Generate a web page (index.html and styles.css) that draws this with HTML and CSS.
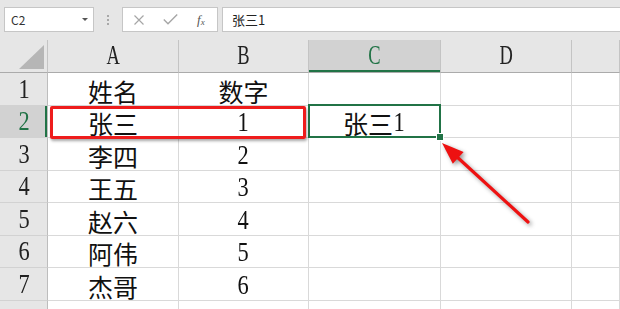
FILE: index.html
```html
<!DOCTYPE html>
<html lang="zh-CN">
<head>
    <meta charset="UTF-8">
    <meta name="viewport" content="width=device-width, initial-scale=1.0">
    <title>张三1</title>
    <link rel="stylesheet" href="styles.css">
</head>
<body>
    <div class="toolbar">
        <div class="namebox">
            <span>C2</span>
            <i class="caret"></i>
        </div>
        <div class="grip"><i></i><i></i><i></i></div>
        <div class="fx-btns">
            <svg class="btn" width="12" height="10" viewBox="0 0 12 10">
                <path d="M1.5 0.5 L10.5 9.5 M10.5 0.5 L1.5 9.5" stroke="#a6a6a6" stroke-width="1.2" fill="none"/>
            </svg>
            <svg class="btn" width="15" height="11" viewBox="0 0 15 11">
                <path d="M0.8 5.6 L5 9.8 L14.2 0.6" stroke="#a6a6a6" stroke-width="1.4" fill="none"/>
            </svg>
            <span class="fx">f<sub>x</sub></span>
        </div>
        <div class="formula">张三1</div>
    </div>

    <div class="sheet">
        <div class="corner"></div>
        <div class="ch"><span class="lat">A</span></div>
        <div class="ch"><span class="lat">B</span></div>
        <div class="ch active"><span class="lat">C</span></div>
        <div class="ch"><span class="lat">D</span></div>
        <div class="ch"></div>

        <div class="rh"><span class="num">1</span></div>
        <div class="c">姓名</div>
        <div class="c">数字</div>
        <div class="c"></div>
        <div class="c"></div>
        <div class="c"></div>

        <div class="rh active"><span class="num">2</span></div>
        <div class="c">张三</div>
        <div class="c"><span class="num">1</span></div>
        <div class="c sel">张三<span class="num">1</span></div>
        <div class="c"></div>
        <div class="c"></div>

        <div class="rh"><span class="num">3</span></div>
        <div class="c">李四</div>
        <div class="c"><span class="num">2</span></div>
        <div class="c"></div>
        <div class="c"></div>
        <div class="c"></div>

        <div class="rh"><span class="num">4</span></div>
        <div class="c">王五</div>
        <div class="c"><span class="num">3</span></div>
        <div class="c"></div>
        <div class="c"></div>
        <div class="c"></div>

        <div class="rh"><span class="num">5</span></div>
        <div class="c">赵六</div>
        <div class="c"><span class="num">4</span></div>
        <div class="c"></div>
        <div class="c"></div>
        <div class="c"></div>

        <div class="rh"><span class="num">6</span></div>
        <div class="c">阿伟</div>
        <div class="c"><span class="num">5</span></div>
        <div class="c"></div>
        <div class="c"></div>
        <div class="c"></div>

        <div class="rh"><span class="num">7</span></div>
        <div class="c">杰哥</div>
        <div class="c"><span class="num">6</span></div>
        <div class="c"></div>
        <div class="c"></div>
        <div class="c"></div>

        <div class="rh"></div>
        <div class="c"></div>
        <div class="c"></div>
        <div class="c"></div>
        <div class="c"></div>
        <div class="c"></div>

        <!-- annotation: red box + arrow -->
        <div class="mark"></div>
        <svg class="arrow" width="620" height="269" viewBox="0 0 620 269">
            <line x1="528" y1="182" x2="456" y2="116" stroke="#ee1111" stroke-width="3.2" stroke-linecap="round"/>
            <polygon points="442,103 463.6,112 452.8,123.8" fill="#ee1111"/>
        </svg>
    </div>
</body>
</html>
```

FILE: styles.css
```css
* {
    margin: 0;
    padding: 0;
    box-sizing: border-box;
}

body {
    width: 620px;
    height: 309px;
    overflow: hidden;
    background: #ffffff;
    font-family: "Noto Sans CJK SC", "Noto Sans", sans-serif;
}

.toolbar {
    height: 40px;
    background: #e6e6e6;
    display: flex;
    align-items: flex-start;
    padding: 7px 0 0 4px;
}

.namebox {
    width: 90px;
    height: 25px;
    background: #fff;
    border: 1px solid #c6c6c6;
    display: flex;
    align-items: center;
    justify-content: space-between;
    padding: 0 5px 0 6px;
    font-size: 12px;
    color: #333;
}

.caret {
    width: 0;
    height: 0;
    border-left: 3px solid transparent;
    border-right: 3px solid transparent;
    border-top: 3px solid #555;
}

.grip {
    width: 28px;
    height: 25px;
    display: flex;
    flex-direction: column;
    align-items: center;
    justify-content: center;
    gap: 2px;
}

.grip i {
    width: 2px;
    height: 2px;
    background: #a8a8a8;
}

.fx-btns {
    width: 96px;
    height: 25px;
    background: #fff;
    border: 1px solid #c6c6c6;
    display: flex;
    align-items: center;
    padding-left: 10px;
}

.fx-btns .btn:first-child {
    margin-right: 18px;
}

.fx-btns .btn:nth-child(2) {
    margin-right: 19px;
}

.fx {
    font-family: "Liberation Serif", serif;
    font-style: italic;
    font-size: 13px;
    color: #555;
}

.fx sub {
    font-size: 9px;
    vertical-align: -1px;
}

.formula {
    flex: 1;
    height: 25px;
    margin-left: 4px;
    background: #fff;
    border: 1px solid #c6c6c6;
    border-right: none;
    font-size: 13px;
    line-height: 23px;
    padding-left: 9px;
    color: #222;
}

/* grid */
.sheet {
    position: relative;
    height: 269px;
    overflow: hidden;
    display: grid;
    grid-template-columns: 48px 131px 130px 132px 131px 1fr;
    grid-template-rows: 33px repeat(7, 32.5px) 9px;
}

.sheet > div {
    border-right: 1px solid #d9d9d9;
    border-bottom: 1px solid #d9d9d9;
    display: flex;
    justify-content: center;
    align-items: flex-end;
    line-height: 1;
}

.sheet > .corner,
.sheet > .ch {
    background: #e6e6e6;
    border-right-color: #c4c4c4;
    border-bottom-color: #ababab;
}

.corner {
    position: relative;
}

.corner::after {
    content: "";
    position: absolute;
    left: 19px;
    top: 5px;
    width: 25px;
    height: 24px;
    background: #b6b6b6;
    clip-path: polygon(100% 0, 100% 100%, 0 100%);
}

.ch {
    padding-bottom: 3px;
    color: #222;
}

.sheet > .ch.active {
    background: #d2d2d2;
    box-shadow: inset 0 -2px 0 #217346;
    color: #217346;
}

.lat {
    display: inline-block;
    font-family: "Liberation Serif", serif;
    font-size: 28px;
    transform: scaleX(0.66);
}

.sheet > .rh {
    background: #e6e6e6;
    border-right-color: #bdbdbd;
    border-bottom-color: #d2d2d2;
    padding-bottom: 2px;
    color: #222;
}

.sheet > .rh.active {
    background: #d2d2d2;
    box-shadow: inset -2px 0 0 #217346;
    color: #217346;
}

.num {
    display: inline-block;
    font-family: "Liberation Serif", serif;
    font-size: 28px;
    transform: scaleX(0.8);
}

.c {
    font-size: 25px;
    color: #111;
    padding-bottom: 1px;
}

.c .num {
    margin-left: -1px;
}

.sel {
    position: relative;
}

.sel::before {
    content: "";
    position: absolute;
    left: -1px;
    top: -2px;
    right: -1px;
    bottom: -1px;
    border: 2px solid #217346;
}

.sel::after {
    content: "";
    position: absolute;
    right: -4px;
    bottom: -4px;
    width: 6px;
    height: 6px;
    background: #217346;
    border: 1px solid #fff;
}

.sheet > .mark {
    position: absolute;
    left: 50px;
    top: 66px;
    width: 256px;
    height: 33px;
    border: 3px solid #ee1c1c;
    border-radius: 2px;
    box-shadow: 1px 2px 3px rgba(0, 0, 0, 0.35);
}

.arrow {
    position: absolute;
    left: 0;
    top: 0;
    pointer-events: none;
    filter: drop-shadow(2px 2px 2px rgba(0, 0, 0, 0.4));
}
```
